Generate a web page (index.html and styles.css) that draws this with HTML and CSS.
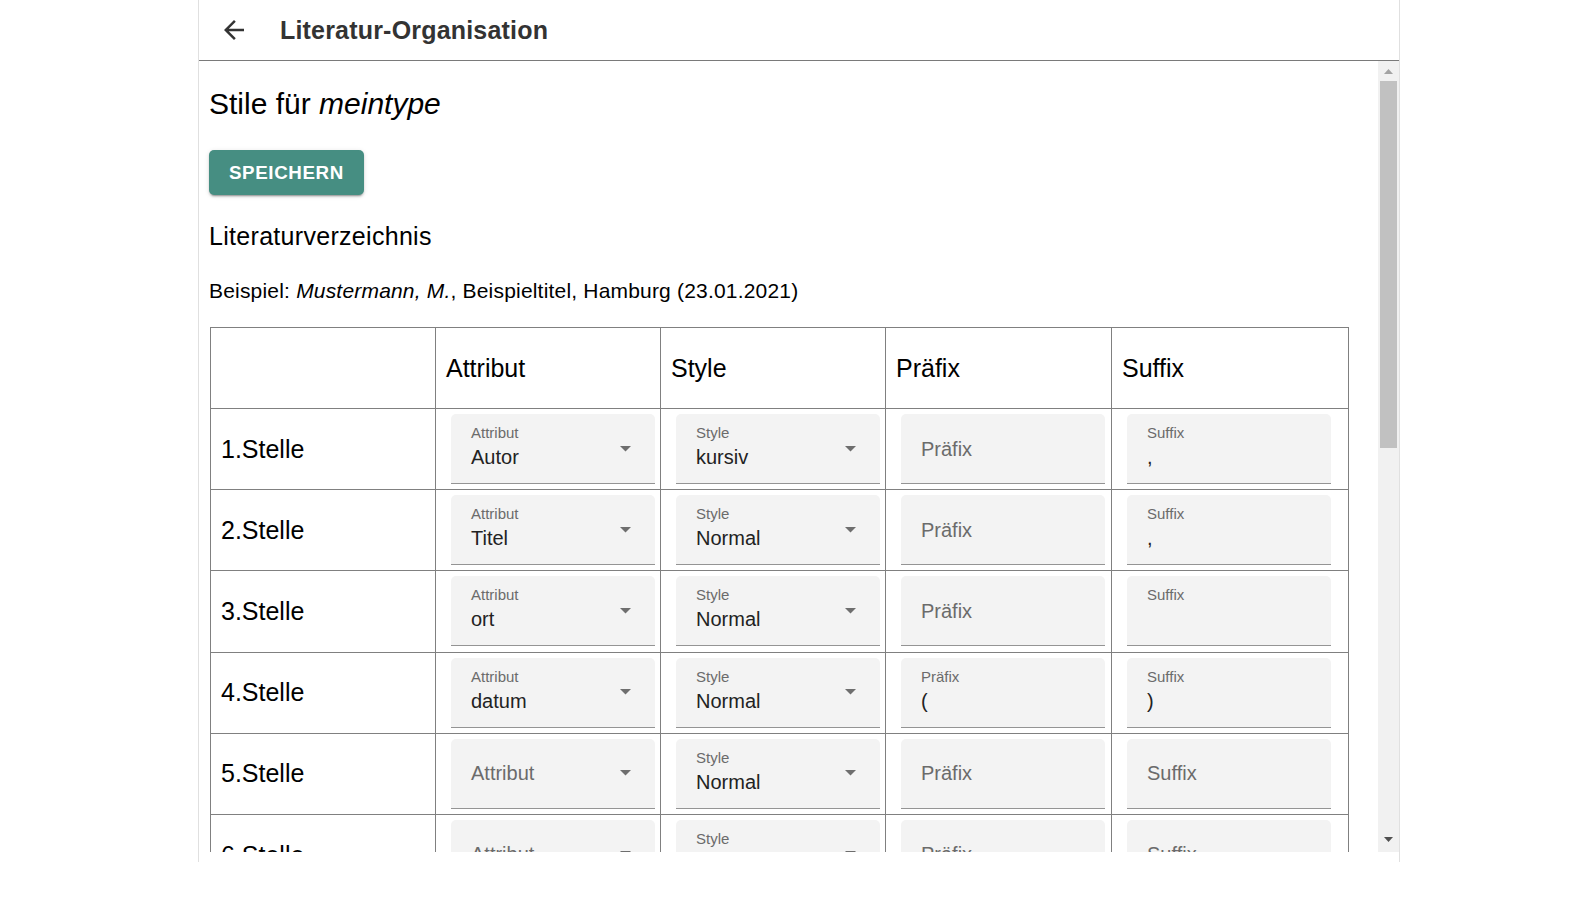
FILE: index.html
```html
<!DOCTYPE html>
<html lang="de">
<head>
<meta charset="utf-8">
<title>Literatur-Organisation</title>
<link rel="stylesheet" href="styles.css">
</head>
<body>
<div class="app">
  <header class="topbar">
    <div class="back">
      <svg width="30" height="30" viewBox="0 0 24 24"><path d="M20 11H7.83l5.59-5.59L12 4l-8 8 8 8 1.41-1.41L7.83 13H20v-2z" fill="#333"/></svg>
    </div>
    <div class="apptitle">Literatur-Organisation</div>
  </header>
  <div class="main">
    <div class="content">
      <h1 class="pagetitle">Stile für <i>meintype</i></h1>
      <button class="btn">SPEICHERN</button>
      <h2 class="section">Literaturverzeichnis</h2>
      <p class="example">Beispiel: <i>Mustermann, M.</i>, Beispieltitel, Hamburg (23.01.2021)</p>
      <table class="styles">
        <colgroup>
          <col class="c1"><col class="c2"><col class="c3"><col class="c4"><col class="c5">
        </colgroup>
        <thead>
          <tr><th></th><th>Attribut</th><th>Style</th><th>Präfix</th><th>Suffix</th></tr>
        </thead>
        <tbody>
          <tr>
            <td class="lbl">1.Stelle</td>
            <td class="fc"><div class="field"><div class="ftext"><span class="flabel">Attribut</span><span class="fvalue">Autor</span></div><svg class="arrow" width="11" height="6" viewBox="0 0 11 6"><path d="M0 0h11L5.5 5.5z"/></svg></div></td>
            <td class="fc"><div class="field"><div class="ftext"><span class="flabel">Style</span><span class="fvalue">kursiv</span></div><svg class="arrow" width="11" height="6" viewBox="0 0 11 6"><path d="M0 0h11L5.5 5.5z"/></svg></div></td>
            <td class="fc"><div class="field empty"><div class="ftext"><span class="fph">Präfix</span></div></div></td>
            <td class="fc"><div class="field"><div class="ftext"><span class="flabel">Suffix</span><span class="fvalue">,</span></div></div></td>
          </tr>
          <tr>
            <td class="lbl">2.Stelle</td>
            <td class="fc"><div class="field"><div class="ftext"><span class="flabel">Attribut</span><span class="fvalue">Titel</span></div><svg class="arrow" width="11" height="6" viewBox="0 0 11 6"><path d="M0 0h11L5.5 5.5z"/></svg></div></td>
            <td class="fc"><div class="field"><div class="ftext"><span class="flabel">Style</span><span class="fvalue">Normal</span></div><svg class="arrow" width="11" height="6" viewBox="0 0 11 6"><path d="M0 0h11L5.5 5.5z"/></svg></div></td>
            <td class="fc"><div class="field empty"><div class="ftext"><span class="fph">Präfix</span></div></div></td>
            <td class="fc"><div class="field"><div class="ftext"><span class="flabel">Suffix</span><span class="fvalue">,</span></div></div></td>
          </tr>
          <tr>
            <td class="lbl">3.Stelle</td>
            <td class="fc"><div class="field"><div class="ftext"><span class="flabel">Attribut</span><span class="fvalue">ort</span></div><svg class="arrow" width="11" height="6" viewBox="0 0 11 6"><path d="M0 0h11L5.5 5.5z"/></svg></div></td>
            <td class="fc"><div class="field"><div class="ftext"><span class="flabel">Style</span><span class="fvalue">Normal</span></div><svg class="arrow" width="11" height="6" viewBox="0 0 11 6"><path d="M0 0h11L5.5 5.5z"/></svg></div></td>
            <td class="fc"><div class="field empty"><div class="ftext"><span class="fph">Präfix</span></div></div></td>
            <td class="fc"><div class="field"><div class="ftext"><span class="flabel">Suffix</span><span class="fvalue">&nbsp;</span></div></div></td>
          </tr>
          <tr>
            <td class="lbl">4.Stelle</td>
            <td class="fc"><div class="field"><div class="ftext"><span class="flabel">Attribut</span><span class="fvalue">datum</span></div><svg class="arrow" width="11" height="6" viewBox="0 0 11 6"><path d="M0 0h11L5.5 5.5z"/></svg></div></td>
            <td class="fc"><div class="field"><div class="ftext"><span class="flabel">Style</span><span class="fvalue">Normal</span></div><svg class="arrow" width="11" height="6" viewBox="0 0 11 6"><path d="M0 0h11L5.5 5.5z"/></svg></div></td>
            <td class="fc"><div class="field"><div class="ftext"><span class="flabel">Präfix</span><span class="fvalue">(</span></div></div></td>
            <td class="fc"><div class="field"><div class="ftext"><span class="flabel">Suffix</span><span class="fvalue">)</span></div></div></td>
          </tr>
          <tr>
            <td class="lbl">5.Stelle</td>
            <td class="fc"><div class="field empty"><div class="ftext"><span class="fph">Attribut</span></div><svg class="arrow" width="11" height="6" viewBox="0 0 11 6"><path d="M0 0h11L5.5 5.5z"/></svg></div></td>
            <td class="fc"><div class="field"><div class="ftext"><span class="flabel">Style</span><span class="fvalue">Normal</span></div><svg class="arrow" width="11" height="6" viewBox="0 0 11 6"><path d="M0 0h11L5.5 5.5z"/></svg></div></td>
            <td class="fc"><div class="field empty"><div class="ftext"><span class="fph">Präfix</span></div></div></td>
            <td class="fc"><div class="field empty"><div class="ftext"><span class="fph">Suffix</span></div></div></td>
          </tr>
          <tr>
            <td class="lbl">6.Stelle</td>
            <td class="fc"><div class="field empty"><div class="ftext"><span class="fph">Attribut</span></div><svg class="arrow" width="11" height="6" viewBox="0 0 11 6"><path d="M0 0h11L5.5 5.5z"/></svg></div></td>
            <td class="fc"><div class="field"><div class="ftext"><span class="flabel">Style</span><span class="fvalue">Normal</span></div><svg class="arrow" width="11" height="6" viewBox="0 0 11 6"><path d="M0 0h11L5.5 5.5z"/></svg></div></td>
            <td class="fc"><div class="field empty"><div class="ftext"><span class="fph">Präfix</span></div></div></td>
            <td class="fc"><div class="field empty"><div class="ftext"><span class="fph">Suffix</span></div></div></td>
          </tr>
        </tbody>
      </table>
    </div>
    <div class="scrollbar">
      <div class="sb-btn"><svg width="9" height="5" viewBox="0 0 9 5"><path d="M4.5 0L9 5H0z" fill="#a3a3a3"/></svg></div>
      <div class="sb-track"><div class="sb-thumb"></div></div>
      <div class="sb-btn down"><svg width="9" height="5" viewBox="0 0 9 5"><path d="M0 0h9L4.5 5z" fill="#505050"/></svg></div>
    </div>
  </div>
</div>
</body>
</html>
```

FILE: styles.css
```css
html, body {
  margin: 0;
  padding: 0;
  background: #fff;
}
body {
  font-family: "Liberation Sans", Arial, sans-serif;
  color: #000;
}
.app {
  margin-left: 198px;
  width: 1202px;
  height: 862px;
  box-sizing: border-box;
  border-left: 1px solid #e0e0e0;
  border-right: 1px solid #e0e0e0;
  display: flex;
  flex-direction: column;
}
.topbar {
  height: 60px;
  flex: none;
  border-bottom: 1px solid #7a7a7a;
  display: flex;
  align-items: center;
}
.back {
  width: 60px;
  height: 60px;
  margin-left: 5px;
  display: flex;
  align-items: center;
  justify-content: center;
}
.apptitle {
  margin-left: 16px;
  font-size: 25px;
  line-height: 40px;
  font-weight: 700;
  letter-spacing: 0.19px;
  color: #333;
}
.main {
  height: 791px;
  flex: none;
  display: flex;
}
.content {
  flex: 1;
  overflow: hidden;
  padding: 23px 0 0 10px;
}
.pagetitle {
  margin: 0;
  font-size: 30px;
  line-height: 40px;
  font-weight: 400;
  color: #000;
}
.btn {
  display: block;
  margin-top: 26px;
  height: 45px;
  padding: 0 20px;
  border: 0;
  border-radius: 5px;
  background: #468e82;
  color: #fff;
  font-family: "Liberation Sans", Arial, sans-serif;
  font-size: 18.75px;
  font-weight: 700;
  line-height: 45px;
  letter-spacing: 0.6px;
  box-shadow: 0 3px 1px -2px rgba(0,0,0,.2), 0 2px 2px 0 rgba(0,0,0,.14), 0 1px 5px 0 rgba(0,0,0,.12);
}
.section {
  margin: 21px 0 0;
  font-size: 25px;
  line-height: 40px;
  font-weight: 400;
  letter-spacing: 0.3px;
}
.example {
  margin: 20px 0 0;
  font-size: 21px;
  line-height: 30px;
  letter-spacing: 0.19px;
}
.styles {
  margin: 21px 0 0 1px;
  border-collapse: collapse;
  table-layout: fixed;
  width: 1138px;
}
.c1, .c2, .c3 { width: 225px; }
.c4 { width: 226px; }
.c5 { width: 237px; }
.styles th, .styles td {
  border: 1px solid #808080;
  padding: 0 10px;
  text-align: left;
  vertical-align: middle;
  font-size: 25px;
  font-weight: 400;
  color: #000;
}
.styles th {
  height: 80px;
}
.styles td.fc {
  padding: 5px 0 5.2px 15px;
}
.field {
  width: 204px;
  height: 70px;
  box-sizing: border-box;
  background: #f3f3f3;
  border-radius: 5px 5px 0 0;
  border-bottom: 1px solid #949494;
  padding-left: 20px;
  display: flex;
  align-items: center;
}
.ftext {
  flex: 1;
  align-self: stretch;
  display: flex;
  flex-direction: column;
  padding-top: 10px;
}
.field.empty .ftext {
  justify-content: center;
  padding-top: 0;
}
.flabel {
  font-size: 15px;
  line-height: 18px;
  color: #6b6b6b;
}
.fvalue {
  margin-top: 3px;
  font-size: 20px;
  line-height: 24px;
  color: #222;
}
.fph {
  font-size: 20px;
  line-height: 24px;
  color: #6b6b6b;
}
.arrow {
  flex: none;
  margin-right: 24px;
  fill: #6e6e6e;
}
.scrollbar {
  width: 21px;
  flex: none;
  background: #f1f1f1;
  display: flex;
  flex-direction: column;
}
.sb-btn {
  height: 20px;
  display: flex;
  align-items: center;
  justify-content: center;
}
.sb-btn.down {
  height: 21px;
  align-items: flex-start;
  padding-top: 6px;
  box-sizing: border-box;
}
.sb-track {
  flex: 1;
  padding: 0 2px;
}
.sb-thumb {
  height: 367px;
  background: #c1c1c1;
}
```
